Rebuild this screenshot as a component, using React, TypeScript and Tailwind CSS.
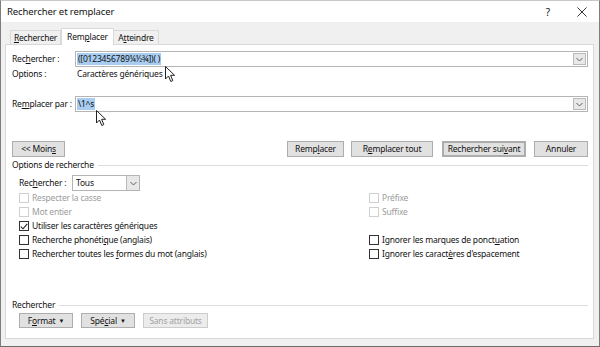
import React from "react";

const font = { fontFamily: '"Noto Sans", "Open Sans", sans-serif' };

function U({ children }: { children: React.ReactNode }) {
  return <span className="underline underline-offset-[1px]">{children}</span>;
}

function Chevron() {
  return (
    <svg width="7" height="5" viewBox="0 0 7 5" className="block">
      <path d="M0.5 1 L3.5 4 L6.5 1" fill="none" stroke="#606060" strokeWidth="1" />
    </svg>
  );
}

function Pointer({ className }: { className: string }) {
  return (
    <svg width="11" height="17" viewBox="0 0 11 17" className={"absolute " + className}>
      <path
        d="M0.5 0.5 L0.5 13 L3.5 10 L5.8 15.5 L7.8 14.6 L5.6 9.3 L9.6 9.3 Z"
        fill="#fff"
        stroke="#222"
        strokeWidth="1"
        strokeLinejoin="round"
      />
    </svg>
  );
}

function Field({ value }: { value: string }) {
  return (
    <div className="flex-1 h-[16px] bg-white border border-[#b4b4b4] flex items-center pl-[1px] pr-[1px]">
      <span className="bg-[#a8cdf0] text-[#111] leading-[12px] px-[1px]">{value}</span>
      <div className="flex-1" />
      <div className="w-[13px] h-[12px] bg-[#e8e8e8] border border-[#b9b9b9] flex items-center justify-center">
        <Chevron />
      </div>
    </div>
  );
}

function Btn({
  w,
  children,
  primary,
  disabled,
}: {
  w: string;
  children: React.ReactNode;
  primary?: boolean;
  disabled?: boolean;
}) {
  return (
    <div
      className={
        "h-full flex items-center justify-center whitespace-nowrap " +
        w +
        (primary ? " border-2 border-[#2b79c9]" : " border") +
        (disabled
          ? " text-[#a3a3a3] bg-[#ececec] border-[#cccccc]"
          : " text-[#111] bg-[#e1e1e1] border-[#adadad]")
      }
    >
      {children}
    </div>
  );
}

function Check({
  children,
  checked,
  disabled,
}: {
  children: React.ReactNode;
  checked?: boolean;
  disabled?: boolean;
}) {
  return (
    <div className="h-[14px] flex items-center gap-[3px] whitespace-nowrap">
      <div
        className={
          "w-[10px] h-[10px] bg-white border flex items-center justify-center " +
          (disabled ? "border-[#cfcfcf]" : "border-[#333]")
        }
      >
        {checked && (
          <svg width="8" height="7" viewBox="0 0 8 7">
            <path d="M0.8 3.6 L3 5.8 L7.3 0.8" fill="none" stroke="#222" strokeWidth="1.1" />
          </svg>
        )}
      </div>
      <span className={disabled ? "text-[#9c9c9c]" : "text-[#111]"}>{children}</span>
    </div>
  );
}

export default function App() {
  return (
    <div
      style={font}
      className="relative w-[600px] h-[347px] bg-[#f0f0f0] border-x border-b border-t border-x-[#7d7d7d] border-b-[#6a6a6a] border-t-[#c8c8c8] text-[8.5px] tracking-[-0.2px] leading-[12px] text-[#111] overflow-hidden flex flex-col whitespace-nowrap"
    >
      {/* title bar */}
      <div className="h-[21px] bg-white flex items-center pl-[6px] pr-[12px]">
        <span className="text-[9.5px] tracking-[-0.1px] text-[#111]">Rechercher et remplacer</span>
        <div className="flex-1" />
        <span className="text-[10px] mr-[27px]">?</span>
        <svg width="10" height="10" viewBox="0 0 10 10">
          <path d="M0.5 0.5 L9.5 9.5 M9.5 0.5 L0.5 9.5" stroke="#333" strokeWidth="1" />
        </svg>
      </div>

      {/* tabs */}
      <div className="h-[22px] flex items-end pl-[9px]">
        <div className="h-[14px] w-[51px] flex items-center justify-center border border-b-0 border-[#d9d9d9] bg-[#f0f0f0]">
          <span>
            <U>R</U>echercher
          </span>
        </div>
        <div className="h-[17px] w-[53px] flex items-center justify-center border border-b-0 border-[#d9d9d9] bg-white -mb-[1px] relative z-10">
          <span>
            Rem<U>p</U>lacer
          </span>
        </div>
        <div className="h-[14px] w-[45px] flex items-center justify-center border border-b-0 border-l-0 border-[#d9d9d9] bg-[#f0f0f0]">
          <span>
            A<U>t</U>teindre
          </span>
        </div>
      </div>

      {/* panel */}
      <div className="ml-[4px] mr-[5px] h-[295px] bg-white border border-[#d9d9d9] flex flex-col pl-[6px] pr-[5px]">
        <div className="mt-[6px] h-[16px] flex items-center">
          <span className="w-[63px]">
            Rec<U>h</U>ercher :
          </span>
          <Field value="([0123456789¼½¾])( )" />
        </div>
        <div className="mt-[1px] h-[12px] flex items-center">
          <span className="w-[65px]">Options :</span>
          <span>Caractères génériques</span>
        </div>
        <div className="mt-[16px] h-[16px] flex items-center">
          <span className="w-[63px]">
            Re<U>m</U>placer par :
          </span>
          <Field value="\1^s" />
        </div>

        {/* buttons */}
        <div className="mt-[29px] h-[16px] flex items-center">
          <Btn w="w-[53px]">
            {"<< Moin"}
            <U>s</U>
          </Btn>
          <div className="flex-1" />
          <Btn w="w-[57px]">
            Remp<U>l</U>acer
          </Btn>
          <div className="w-[7px]" />
          <Btn w="w-[82px]">
            R<U>e</U>mplacer tout
          </Btn>
          <div className="w-[9px]" />
          <Btn w="w-[84px]" primary>
            Rechercher sui<U>v</U>ant
          </Btn>
          <div className="w-[8px]" />
          <Btn w="w-[54px]">Annuler</Btn>
        </div>

        {/* options header */}
        <div className="mt-[2px] h-[12px] flex items-center">
          <span className="pr-[4px]">Options de recherche</span>
          <div className="flex-1 h-px bg-[#dcdcdc]" />
        </div>

        <div className="mt-[4px] h-[16px] flex items-center pl-[7px]">
          <span className="w-[53px]">
            Rec<U>h</U>ercher :
          </span>
          <div className="w-[68px] h-[16px] border border-[#b4b4b4] bg-white flex items-center">
            <span className="pl-[3px] flex-1">Tous</span>
            <div className="w-[13px] h-[14px] bg-[#e8e8e8] border-l border-[#b9b9b9] flex items-center justify-center">
              <Chevron />
            </div>
          </div>
        </div>

        <div className="flex pl-[7px]">
          <div className="w-[350px] flex flex-col">
            <Check disabled>Respecter la casse</Check>
            <Check disabled>Mot entier</Check>
            <Check checked>
              Utiliser les caractères <U>g</U>énériques
            </Check>
            <Check>
              Recherche phonéti<U>q</U>ue (anglais)
            </Check>
            <Check>
              Rechercher toutes les <U>f</U>ormes du mot (anglais)
            </Check>
          </div>
          <div className="flex flex-col">
            <Check disabled>Préfixe</Check>
            <Check disabled>Suffixe</Check>
            <div className="h-[14px]" />
            <Check>
              Ignorer les marques de ponct<U>u</U>ation
            </Check>
            <Check>
              Ignorer les caract<U>è</U>res d'espacement
            </Check>
          </div>
        </div>

        {/* bottom section */}
        <div className="mt-[38px] h-[12px] flex items-center">
          <span className="pr-[4px]">Rechercher</span>
          <div className="flex-1 h-px bg-[#dcdcdc]" />
        </div>
        <div className="mt-[2px] h-[15px] flex items-center pl-[7px] gap-[8px]">
          <Btn w="w-[54px]">
            F<U>o</U>rmat
            <span className="ml-[3px] text-[6px]">▼</span>
          </Btn>
          <Btn w="w-[54px]">
            Spé<U>c</U>ial
            <span className="ml-[3px] text-[6px]">▼</span>
          </Btn>
          <Btn w="w-[65px]" disabled>
            Sans attributs
          </Btn>
        </div>
      </div>

      <Pointer className="left-[164px] top-[65px]" />
      <Pointer className="left-[95px] top-[109px]" />
    </div>
  );
}
